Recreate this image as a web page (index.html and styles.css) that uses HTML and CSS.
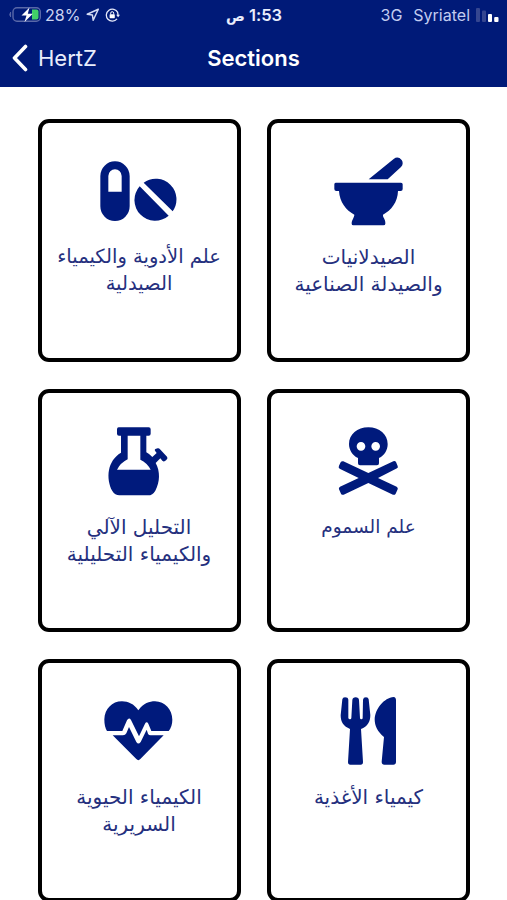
FILE: index.html
```html
<!DOCTYPE html>
<html lang="ar">
<head>
<meta charset="utf-8">
<title>Sections</title>
<link rel="stylesheet" href="styles.css">
</head>
<body>
<header class="header">
  <div class="status">
    <div class="status-left">
      <svg class="battery" viewBox="0 0 32 16" width="32" height="16"><rect x="4" y=".8" width="27.300" height="13.500" rx="4" fill="none" stroke="#5968a8" stroke-width="1.400"/><path d="M1.600 5.200Q0 7.500 1.600 9.800Z" fill="#5968a8" stroke="#5968a8"/><path d="M23 2.600h4.500q2 0 2 2v6q0 2-2 2H23z" fill="#41cf68"/><path d="M20.500.5 12.500 8.600h5L15.500 15 23.800 6.700h-5z" fill="#fff"/></svg>
      <span class="percent">28%</span>
      <svg class="arrow" viewBox="0 0 14 14" width="14" height="14"><path d="M12.300 1.300 1.200 6.200l5.200.8.800 5.300z" fill="none" stroke="#d5dcf4" stroke-width="1.500" stroke-linejoin="round"/></svg>
      <svg class="lock" viewBox="0 0 15 14" width="15" height="14"><path d="M12.700 4.400A6 6 0 1 0 12 10.900M12.700 4.400l.4 3.500" fill="none" stroke="#e6eafa" stroke-width="1.300"/><path d="M11.200 6.800h3.800l-1.900 2.500z" fill="#e6eafa"/><rect x="4.600" y="6.200" width="5.200" height="4" rx=".7" fill="#fff"/><path d="M5.700 6.500V5.200a1.500 1.500 0 0 1 3 0v1.300" fill="none" stroke="#fff"/></svg>
    </div>
    <div class="clock" dir="rtl">1:53 <span class="meridiem">ص</span></div>
    <div class="status-right">
      <span class="network">3G</span><span class="carrier">Syriatel</span>
      <svg class="signal" viewBox="0 0 23 14" width="23" height="14"><rect width="4" height="14" rx="1" fill="#354690"/><rect x="6" y="2.500" width="4" height="11.500" rx="1" fill="#354690"/><rect x="12" y="6" width="4" height="8" rx="1" fill="#fff"/><rect x="18.200" y="9" width="4.300" height="5" rx="1" fill="#fff"/></svg>
    </div>
  </div>
  <div class="nav">
    <div class="back"><svg viewBox="0 0 18 28" width="18" height="28"><path d="M14.500 2.500 3.500 14l11 11.500" fill="none" stroke="#fff" stroke-width="3.600" stroke-linecap="round" stroke-linejoin="round"/></svg><span class="back-label">HertZ</span></div>
    <h1 class="title">Sections</h1>
  </div>
</header>
<main class="grid" dir="rtl">
  <section class="card">
    <svg class="icon" viewBox="191 140 270 207"><path d="M325 207 400 146Q413 136 424 149 431 160 422 170L382 207ZM226 217H422Q427 217 427 222V236Q427 242 421 242H413C412 275 393 300 368 313 367 322 375 325 375 337V340Q375 345 369 345H279Q274 345 274 340C274 328 282 322 282 313 257 300 238 275 236 242H228Q222 242 222 236V222Q222 217 226 217Z"/></svg>
    <p class="label">الصيدلانيات<br>والصيدلة الصناعية</p>
  </section>
  <section class="card">
    <svg class="icon" viewBox="193 140 270 207"><path fill-rule="evenodd" d="M212 197a44 44 0 0 1 88 0v91a44 44 0 0 1-88 0ZM236 197v47h40v-47a20 20 0 0 0-40 0Z"/><path d="M342 217A62 62 0 0 1 429 303ZM330 228A62 62 0 0 0 417 316Z"/></svg>
    <p class="label label-long">علم الأدوية والكيمياء<br>الصيدلية</p>
  </section>
  <section class="card">
    <svg class="icon" viewBox="191 140 270 207"><path fill-rule="evenodd" d="M324 141C357 141 382 162 382 191 382 209 373 225 356 233V249Q356 255 350 255H299Q293 255 293 249V233C276 225 266 209 266 191 266 162 291 141 324 141ZM302 185a13 13 0 1 0 0 26 13 13 0 0 0 0-26ZM346 185a13 13 0 1 0 0 26 13 13 0 0 0 0-26Z"/><path d="M249 243 324 278 399 243Q404 241 407 245L412 257Q414 262 410 264L353 293 409 319Q414 322 412 327L406 340Q403 345 398 343L324 308 250 343Q245 345 242 340L236 327Q234 322 239 319L295 293 238 265Q233 262 236 256L241 246Q244 241 249 243Z"/></svg>
    <p class="label label-narrow">علم السموم</p>
  </section>
  <section class="card">
    <svg class="icon" viewBox="193 140 270 207"><path fill-rule="evenodd" d="M267 141H357Q363 141 363 147V160Q363 166 357 166H350V216Q361 222 368 230L381 218 377 213Q373 209 377 206L384 204Q388 203 391 207L412 229Q416 233 410 239L406 242Q402 245 398 241L392 234 378 248C392 273 391 305 377 331Q369 345 355 345H269Q256 345 248 332C228 294 233 241 274 217V166H268Q262 166 262 160V147Q262 141 267 141ZM294 166V237Q272 248 262 268H363Q352 247 332 238V166Z"/></svg>
    <p class="label">التحليل الآلي<br>والكيمياء التحليلية</p>
  </section>
  <section class="card">
    <svg class="icon" viewBox="191 140 270 207"><path d="M246 147Q247 141 254 141 263 141 264 148V203Q265 207 269 207 273 207 273 203L276 149Q277 141 286 141 295 141 296 149L299 203Q299 207 303 207 307 207 307 203L308 148Q309 141 317 141 324 141 325 147L330 194C330 215 322 228 302 236L308 335Q308 343 301 343H270Q263 343 263 335L269 236C250 228 241 216 241 195ZM400 140Q407 141 407 150V334Q407 343 399 343H372Q364 343 364 334L371 260C351 244 343 226 343 207 345 174 371 143 400 140Z"/></svg>
    <p class="label">كيمياء الأغذية</p>
  </section>
  <section class="card">
    <svg class="icon" viewBox="193 140 270 207"><path d="M326 180C342 158 359 153 376 153 406 154 428 178 428 208Q428 228 417 242H365L356 220Q351 212 346 220L328 258 304 209Q298 200 292 210L278 242H232Q224 230 224 207C225 176 247 153 277 153 296 153 313 161 326 180ZM249 255H280Q287 255 290 249L298 230 320 275Q326 284 333 275L351 238 355 250Q357 255 363 255H402L332 326Q326 333 320 326Z"/></svg>
    <p class="label">الكيمياء الحيوية<br>السريرية</p>
  </section>
</main>
</body>
</html>
```
FILE: styles.css
```css
* { box-sizing: border-box; }
body { margin: 0; height: 900px; overflow: hidden; background: #fff; font-family: Inter, "DejaVu Sans", sans-serif; }
.header { height: 87px; background: #001a78; color: #e9edfc; }
.status { height: 30px; display: grid; grid-template-columns: 1fr auto 1fr; align-items: center; padding: 0 8px 0 9px; }
.status-left, .status-right { display: flex; align-items: center; font-size: 16px; }
.status-right { justify-content: flex-end; }
.status-left { color: #ccd4f0; }
.status-right { color: #c3ccf0; }
.percent { margin: 0 6px 0 4px; }
.arrow { margin-right: 5px; }
.carrier { margin: 0 6px 0 11px; }
.clock { font-size: 16.500px; font-weight: 600; letter-spacing: .4px; }
.meridiem { font-family: "DejaVu Sans", sans-serif; font-weight: 700; font-size: 14px; }
.nav { height: 56px; display: grid; grid-template-columns: 1fr auto 1fr; align-items: center; padding: 0 11px; }
.back { display: flex; align-items: center; gap: 9px; }
.back-label { font-size: 22px; }
.title { margin: 0; font-size: 22px; font-weight: 600; color: #fff; }
.grid { display: grid; grid-template-columns: 203px 203px; grid-auto-rows: 243px; gap: 27px 26.500px; padding: 32px 37px 0; }
.card { border: 4px solid #000; border-radius: 11px; padding-top: 34px; display: flex; flex-direction: column; align-items: center; }
.icon { width: 90px; height: 69px; fill: #001a7c; flex: none; }
.label { margin: 18px 0 0; font-family: "DejaVu Sans", sans-serif; font-size: 20px; line-height: 26.500px; color: #25307e; text-align: center; white-space: nowrap; }
.label-long { font-size: 19.500px; }
.label-narrow { font-size: 18.500px; }
```
